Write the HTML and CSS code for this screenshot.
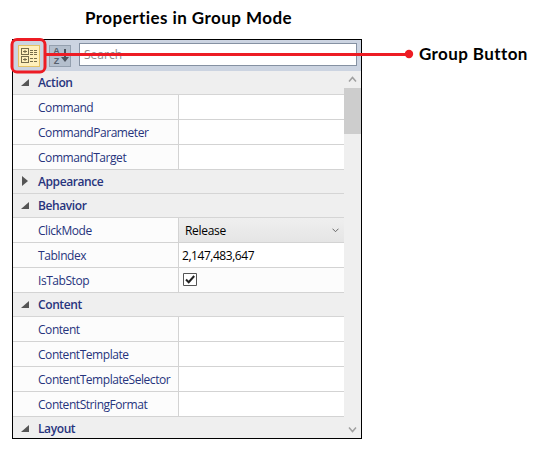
FILE: index.html
```html
<!DOCTYPE html>
<html lang="en">
<head>
<meta charset="utf-8">
<title>Properties in Group Mode</title>
<link rel="stylesheet" href="styles.css">
</head>
<body>
<h1 class="title">Properties in Group Mode</h1>
<main class="panel">
  <div class="toolbar">
    <button class="tool group" aria-label="Group">
      <svg width="22" height="22" viewBox="0 0 22 22" fill="#756c4a"><path fill-rule="evenodd" d="M3 3h8v7H3zM4 4v5h6V4zM3 11h8v7H3zM4 12v5h6v-5z"/><path d="M5 6h4v1H5zM6.500 5h1v3h-1zM5 14h4v1H5zM6.500 13h1v3h-1zM12 5h3v1h-3zM16 5h3v1h-3zM12 7h3v1h-3zM16 7h3v1h-3zM12 9h3v1h-3zM16 9h3v1h-3zM12 13h3v1h-3zM16 13h3v1h-3zM12 16h3v1h-3zM16 16h3v1h-3z"/></svg>
    </button>
    <button class="tool sort" aria-label="Sort">
      <span class="az"><span>A</span><span>Z</span></span>
      <svg width="8" height="16" viewBox="0 0 8 16"><path d="M3 1h2v8h3L4 14 0 9h3z" fill="#4b525c"/></svg>
    </button>
    <div class="search">Search</div>
  </div>
  <div class="body">
    <div class="grid">
      <div class="head open">Action</div>
      <div class="row"><div class="name">Command</div><div class="value"></div></div>
      <div class="row"><div class="name">CommandParameter</div><div class="value"></div></div>
      <div class="row"><div class="name">CommandTarget</div><div class="value"></div></div>
      <div class="head closed">Appearance</div>
      <div class="head open">Behavior</div>
      <div class="row"><div class="name">ClickMode</div><div class="value combo">Release<svg width="7" height="5" viewBox="0 0 7 5"><path d="M.5.7 3.500 3.700 6.500.7" fill="none" stroke="#666"/></svg></div></div>
      <div class="row"><div class="name">TabIndex</div><div class="value number">2,147,483,647</div></div>
      <div class="row"><div class="name">IsTabStop</div><div class="value check"><svg width="14" height="13" viewBox="0 0 14 13"><path d="M.5.5h13v12H.5z" fill="#fff" stroke="#555"/><path d="M3 6.500 5.700 9.200 11.200 3" fill="none" stroke="#222" stroke-width="2"/></svg></div></div>
      <div class="head open">Content</div>
      <div class="row"><div class="name">Content</div><div class="value"></div></div>
      <div class="row"><div class="name">ContentTemplate</div><div class="value"></div></div>
      <div class="row"><div class="name">ContentTemplateSelector</div><div class="value"></div></div>
      <div class="row"><div class="name">ContentStringFormat</div><div class="value"></div></div>
      <div class="head open last">Layout</div>
    </div>
    <div class="scrollbar">
      <svg width="17" height="17" viewBox="0 0 17 17"><path d="M5 10.500 8.500 6.500 12 10.500" fill="none" stroke="#a0a0a0" stroke-width="1.500"/></svg>
      <div class="thumb"></div>
      <svg class="down" width="17" height="17" viewBox="0 0 17 17"><path d="M5 6.500 8.500 10.500 12 6.500" fill="none" stroke="#a0a0a0" stroke-width="1.500"/></svg>
    </div>
  </div>
</main>
<svg class="callout" width="537" height="455" viewBox="0 0 537 455"><rect x="12" y="39.500" width="33" height="32.500" rx="5" fill="none" stroke="#ed1c24" stroke-width="3"/><path d="M45 54.500H409" stroke="#ed1c24" stroke-width="3"/><circle cx="409" cy="54" r="4.200" fill="#ed1c24"/></svg>
<div class="callout-label">Group Button</div>
</body>
</html>
```
FILE: styles.css
```css
* { box-sizing: border-box; }
body {
  margin: 0;
  width: 537px;
  height: 455px;
  overflow: hidden;
  position: relative;
  background: #fff;
  font: 12px "Open Sans", sans-serif;
}
.title, .callout-label {
  font: 700 17px/20px Lato, sans-serif;
  color: #000;
  white-space: nowrap;
}
.title { margin: 0; padding: 8px 0 11px 85px; letter-spacing: .44px; }
.panel {
  width: 350px;
  height: 400px;
  margin-left: 12px;
  border: 1px solid #000;
  display: flex;
  flex-direction: column;
}
.toolbar {
  height: 31px;
  flex: none;
  background: #ccd4e1;
  display: flex;
  align-items: flex-start;
  padding: 3px 4px 0 5px;
}
.tool {
  width: 22px;
  height: 22px;
  margin: 2px 0 0;
  padding: 0;
  border: 1px solid #e5c365;
  background: #fff0bc;
  display: flex;
}
.tool svg { flex: none; }
.group svg { margin: -1px; }
.sort {
  margin-left: 9px;
  border-color: #939fae;
  background: #b4bfcd;
  align-items: center;
  padding-left: 3px;
  gap: 1px;
}
.az {
  width: 7px;
  display: flex;
  flex-direction: column;
  font: 700 9px/10px "Liberation Sans", sans-serif;
  color: #56606c;
}
.search {
  width: 278px;
  height: 23px;
  margin-left: 8px;
  border: 1px solid #8591a2;
  background: #fff;
  color: #8c8c8c;
  padding-left: 4px;
  line-height: 22px;
}
.body { flex: 1; min-height: 0; display: flex; }
.grid { width: 331px; overflow: hidden; }
.head {
  height: 24px;
  padding-left: 25px;
  border-bottom: 1px solid #d5d5d5;
  background: #efefef;
  color: #27347d;
  font-weight: 600;
  line-height: 24px;
  letter-spacing: -.4px;
  position: relative;
}
.head::before { content: ""; position: absolute; background: #555; }
.open::before { left: 8px; top: 8px; width: 8px; height: 7px; clip-path: polygon(100% 0, 100% 100%, 0 100%); }
.closed::before { left: 9px; top: 6px; width: 6px; height: 10px; clip-path: polygon(0 0, 100% 50%, 0 100%); }
.last { border: 0; }
.row { height: 25px; display: flex; border-bottom: 1px solid #d3d3d3; }
.name {
  width: 166px;
  padding-left: 25px;
  border-right: 1px solid #d3d3d3;
  background: #fcfcfc;
  color: #27347d;
  line-height: 26px;
  letter-spacing: -.45px;
  white-space: nowrap;
}
.value { flex: 1; background: #fff; line-height: 25px; color: #000; }
.combo {
  display: flex;
  align-items: center;
  justify-content: space-between;
  padding: 0 5px 0 6px;
  letter-spacing: -.3px;
  background: linear-gradient(#efefef, #e5e5e5);
}
.number { padding-left: 3px; letter-spacing: -.45px; }
.check { background: #fcfcfc; padding: 5px 0 0 4px; }
.check svg { display: block; }
.scrollbar { width: 17px; background: #efefef; display: flex; flex-direction: column; }
.thumb { height: 46px; background: #cdcdcd; }
.down { margin-top: auto; }
.callout { position: absolute; left: 0; top: 0; pointer-events: none; }
.callout-label { position: absolute; left: 419px; top: 44px; letter-spacing: .4px; }
```
